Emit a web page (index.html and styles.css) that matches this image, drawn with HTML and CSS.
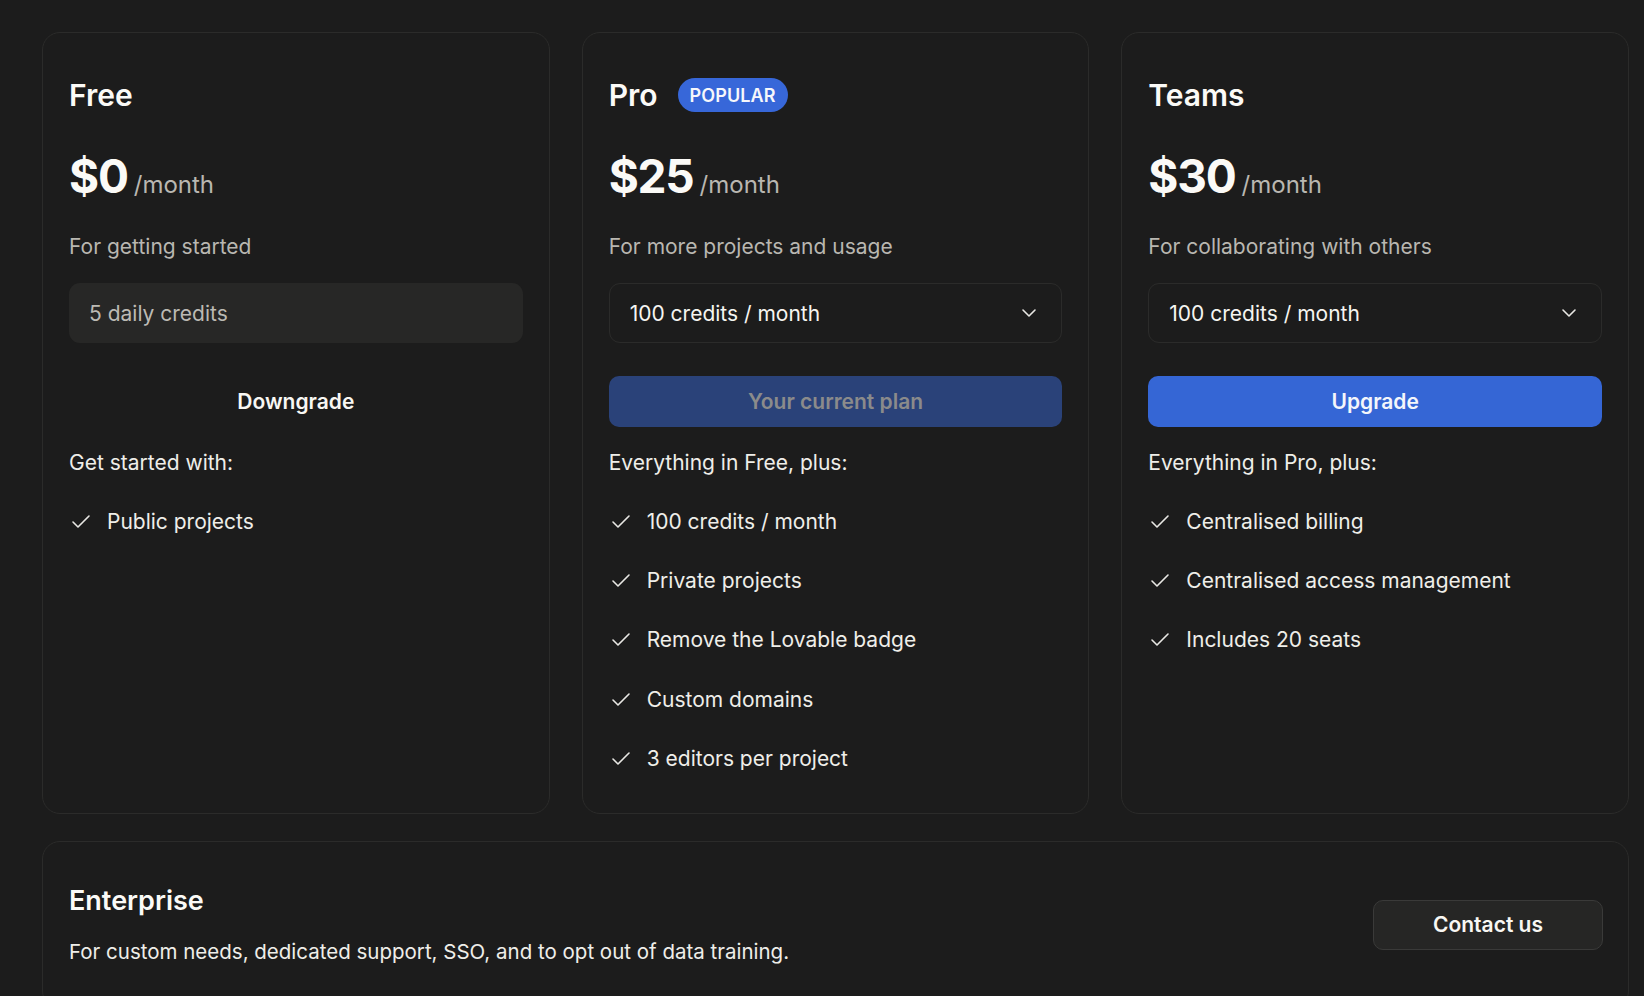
FILE: index.html
```html
<!DOCTYPE html>
<html lang="en">
<head>
<meta charset="utf-8">
<title>Plans</title>
<link rel="stylesheet" href="styles.css">
</head>
<body>
<main class="page">
  <section class="plans">
    <article class="card">
      <div class="title-row"><h2 class="plan-name">Free</h2></div>
      <div class="price-row"><span class="price">$0</span><span class="per">/month</span></div>
      <p class="desc">For getting started</p>
      <div class="static-box">5 daily credits</div>
      <button class="btn plan-btn btn-ghost">Downgrade</button>
      <p class="list-head">Get started with:</p>
      <ul class="features">
        <li><svg class="check" viewBox="0 0 24 24"><polyline points="20 6 9 17 4 12"/></svg><span>Public projects</span></li>
      </ul>
    </article>

    <article class="card">
      <div class="title-row"><h2 class="plan-name">Pro</h2><span class="badge">POPULAR</span></div>
      <div class="price-row"><span class="price">$25</span><span class="per">/month</span></div>
      <p class="desc">For more projects and usage</p>
      <div class="select"><span>100 credits / month</span><svg class="chev" viewBox="0 0 24 24"><path d="m6 9 6 6 6-6"/></svg></div>
      <button class="btn plan-btn btn-current">Your current plan</button>
      <p class="list-head">Everything in Free, plus:</p>
      <ul class="features">
        <li><svg class="check" viewBox="0 0 24 24"><polyline points="20 6 9 17 4 12"/></svg><span>100 credits / month</span></li>
        <li><svg class="check" viewBox="0 0 24 24"><polyline points="20 6 9 17 4 12"/></svg><span>Private projects</span></li>
        <li><svg class="check" viewBox="0 0 24 24"><polyline points="20 6 9 17 4 12"/></svg><span>Remove the Lovable badge</span></li>
        <li><svg class="check" viewBox="0 0 24 24"><polyline points="20 6 9 17 4 12"/></svg><span>Custom domains</span></li>
        <li><svg class="check" viewBox="0 0 24 24"><polyline points="20 6 9 17 4 12"/></svg><span>3 editors per project</span></li>
      </ul>
    </article>

    <article class="card">
      <div class="title-row"><h2 class="plan-name">Teams</h2></div>
      <div class="price-row"><span class="price">$30</span><span class="per">/month</span></div>
      <p class="desc">For collaborating with others</p>
      <div class="select"><span>100 credits / month</span><svg class="chev" viewBox="0 0 24 24"><path d="m6 9 6 6 6-6"/></svg></div>
      <button class="btn plan-btn btn-primary">Upgrade</button>
      <p class="list-head">Everything in Pro, plus:</p>
      <ul class="features">
        <li><svg class="check" viewBox="0 0 24 24"><polyline points="20 6 9 17 4 12"/></svg><span>Centralised billing</span></li>
        <li><svg class="check" viewBox="0 0 24 24"><polyline points="20 6 9 17 4 12"/></svg><span>Centralised access management</span></li>
        <li><svg class="check" viewBox="0 0 24 24"><polyline points="20 6 9 17 4 12"/></svg><span>Includes 20 seats</span></li>
      </ul>
    </article>
  </section>

  <section class="card enterprise">
    <div class="ent-text">
      <h2 class="ent-name">Enterprise</h2>
      <p class="ent-desc">For custom needs, dedicated support, SSO, and to opt out of data training.</p>
    </div>
    <button class="btn btn-contact">Contact us</button>
  </section>
</main>
</body>
</html>
```

FILE: styles.css
```css
* { box-sizing: border-box; }

html, body {
  margin: 0;
  background: #1c1c1c;
}

body {
  font-family: Inter, "Noto Sans", "Liberation Sans", sans-serif;
  color: #f4f3ef;
  padding: 32px 15px 0 42px;
}

.page {
  display: flex;
  flex-direction: column;
  gap: 27px;
}

.plans {
  display: grid;
  grid-template-columns: repeat(3, 1fr);
  gap: 32px;
}

.card {
  background: #1c1c1c;
  border: 1px solid #2b2b2a;
  border-radius: 18px;
  padding: 44px 26px 40px;
  display: flex;
  flex-direction: column;
}

.title-row {
  display: flex;
  align-items: center;
  gap: 20px;
  height: 36px;
}

.plan-name {
  margin: 0;
  font-size: 30px;
  line-height: 36px;
  font-weight: 600;
  color: #fbfaf7;
}

.badge {
  display: inline-flex;
  align-items: center;
  height: 34px;
  padding: 0 12px;
  border-radius: 17px;
  background: #3767d9;
  color: #f6f7fb;
  font-size: 18px;
  font-weight: 600;
  letter-spacing: 0.1px;
}

.price-row {
  display: flex;
  align-items: baseline;
  gap: 6px;
  margin-top: 40px;
  height: 46px;
}

.price {
  font-size: 46px;
  line-height: 46px;
  font-weight: 700;
  letter-spacing: -1.2px;
  color: #fbfaf7;
}

.per {
  font-size: 24px;
  line-height: 46px;
  color: #b9b7b1;
}

.desc {
  margin: 34px 0 0;
  font-size: 21px;
  line-height: 28px;
  color: #b9b7b1;
}

.static-box,
.select {
  margin-top: 22px;
  height: 60px;
  border-radius: 11px;
  display: flex;
  align-items: center;
  padding: 0 20px;
  font-size: 21px;
}

.static-box {
  background: #272726;
  color: #bcbab4;
}

.select {
  border: 1px solid #2b2b2a;
  justify-content: space-between;
  color: #f6f5f1;
}

.chev {
  width: 24px;
  height: 24px;
  fill: none;
  stroke: #e9e8e4;
  stroke-width: 1.6;
  stroke-linecap: round;
  stroke-linejoin: round;
}

.btn {
  font-family: inherit;
  border: 0;
  cursor: pointer;
  height: 51px;
  border-radius: 10px;
  font-size: 21px;
  font-weight: 600;
  display: flex;
  align-items: center;
  justify-content: center;
}

.plan-btn {
  margin-top: 33px;
  width: 100%;
}

.btn-ghost {
  background: transparent;
  color: #f8f7f3;
}

.btn-current {
  background: #2a4279;
  color: #8b8b8b;
}

.btn-primary {
  background: #3566d5;
  color: #f4f6fb;
}

.list-head {
  margin: 22px 0 0;
  font-size: 21px;
  line-height: 28px;
  color: #efeee9;
}

.features {
  list-style: none;
  margin: 31px 0 0;
  padding: 0;
  display: flex;
  flex-direction: column;
  gap: 31.2px;
}

.features li {
  display: flex;
  align-items: center;
  gap: 14px;
  font-size: 21px;
  line-height: 28px;
  color: #efeee9;
}

.check {
  width: 24px;
  height: 24px;
  flex: none;
  fill: none;
  stroke: #e9e8e4;
  stroke-width: 1.6;
  stroke-linecap: round;
  stroke-linejoin: round;
}

.enterprise {
  flex-direction: row;
  align-items: center;
  justify-content: space-between;
  padding: 42px 25px 42px 26px;
}

.ent-text {
  flex: 1 1 auto;
  min-width: 0;
}

.ent-name {
  margin: 0;
  font-size: 27px;
  line-height: 34px;
  font-weight: 600;
  color: #fbfaf7;
}

.ent-desc {
  margin: 20px 0 0;
  font-size: 20.5px;
  line-height: 28px;
  color: #efeee9;
  white-space: nowrap;
}

.btn-contact {
  flex: none;
  width: 230px;
  height: 50px;
  background: #262625;
  border: 1px solid #3a3a39;
  color: #f8f7f3;
}
```
